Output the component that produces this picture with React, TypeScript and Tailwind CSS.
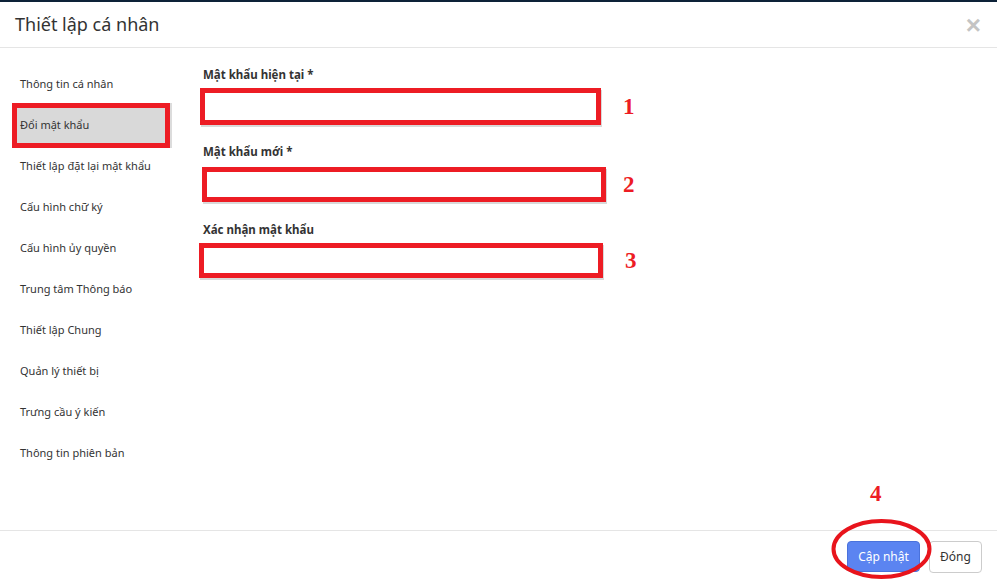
import React from 'react';

const menuItems = [
  'Thông tin cá nhân',
  'Đổi mật khẩu',
  'Thiết lập đặt lại mật khẩu',
  'Cấu hình chữ ký',
  'Cấu hình ủy quyền',
  'Trung tâm Thông báo',
  'Thiết lập Chung',
  'Quản lý thiết bị',
  'Trưng cầu ý kiến',
  'Thông tin phiên bản',
];

const font = { fontFamily: '"Noto Sans", "Liberation Sans", sans-serif' };

const Mark: React.FC<{ n: string; className?: string }> = ({ n, className }) => (
  <span
    className={`text-[23px] font-bold leading-none text-[#ed1c24] ${className ?? ''}`}
    style={{ fontFamily: '"Liberation Serif", serif' }}
  >
    {n}
  </span>
);

const App: React.FC = () => {
  const active = 1;

  return (
    <div className="relative h-[580px] w-[997px] overflow-hidden bg-[#0d2238] pt-[2px]" style={font}>
      <div className="flex h-[578px] flex-col bg-white">
        {/* header */}
        <div className="flex h-[46px] shrink-0 items-center justify-between border-b border-[#e5e5e5] pl-[15px] pr-[16px]">
          <h4 className="text-[18px] text-[#333]">Thiết lập cá nhân</h4>
          <span className="text-[26px] font-bold leading-none text-[#c4c4c4]" style={{ fontFamily: '"Liberation Sans", sans-serif' }}>
            ×
          </span>
        </div>

        {/* body */}
        <div className="flex flex-1">
          <ul className="w-[200px] shrink-0 pt-[16px]">
            {menuItems.map((item, i) =>
              i === active ? (
                <li
                  key={item}
                  className="-my-[2px] ml-[12px] flex h-[45px] w-[158px] items-center border-[5px] border-[#ed1c24] bg-[#d9d9d9] pl-[3px] text-[11px] text-[#333] shadow-[2px_0_0_#dcdcdc]"
                >
                  {item}
                </li>
              ) : (
                <li key={item} className="ml-[12px] flex h-[41px] items-center pl-[8px] text-[11px] text-[#333]">
                  {item}
                </li>
              )
            )}
          </ul>

          <div className="relative flex-1 pt-[19px]">
            <label className="ml-[3px] block text-[11.5px] font-bold leading-[16px] text-[#333]">Mật khẩu hiện tại *</label>
            <div className="mt-[5px] flex items-center">
              <input type="password" className="h-[37px] w-[401px] border-[5px] border-[#ed1c24] bg-white shadow-[1px_2px_0_#d9d9d9] outline-none" />
              <Mark n="1" className="ml-[22px]" />
            </div>

            <label className="ml-[3px] mt-[19px] block text-[11.5px] font-bold leading-[16px] text-[#333]">Mật khẩu mới *</label>
            <div className="mt-[7px] flex items-center">
              <input type="password" className="ml-[2px] h-[35px] w-[404px] border-[5px] border-[#ed1c24] bg-white shadow-[1px_2px_0_#d9d9d9] outline-none" />
              <Mark n="2" className="ml-[17px]" />
            </div>

            <label className="ml-[3px] mt-[20px] block text-[11.5px] font-bold leading-[16px] text-[#333]">Xác nhận mật khẩu</label>
            <div className="mt-[5px] flex items-center">
              <input type="password" className="-ml-[1px] h-[35px] w-[404px] border-[5px] border-[#ed1c24] bg-white shadow-[1px_2px_0_#d9d9d9] outline-none" />
              <Mark n="3" className="ml-[22px]" />
            </div>

            <Mark n="4" className="absolute left-[670px] top-[434px]" />
          </div>
        </div>

        {/* footer */}
        <div className="flex h-[50px] shrink-0 items-start justify-end gap-[9px] border-t border-[#e5e5e5] pr-[15px] pt-[10px]">
          <button className="h-[31px] w-[73px] rounded-[4px] border border-[#4a72dc] bg-[#5b84f1] text-[12px] text-white">
            Cập nhật
          </button>
          <button className="h-[32px] w-[53px] rounded-[4px] border border-[#cccccc] bg-white text-[12px] text-[#333]">
            Đóng
          </button>
        </div>
      </div>

      {/* annotation ellipse */}
      <svg className="pointer-events-none absolute left-0 top-0" width="997" height="580">
        <ellipse cx="881.5" cy="549" rx="48" ry="28" fill="none" stroke="#e8141c" strokeWidth="4" />
      </svg>
    </div>
  );
};

export default App;
